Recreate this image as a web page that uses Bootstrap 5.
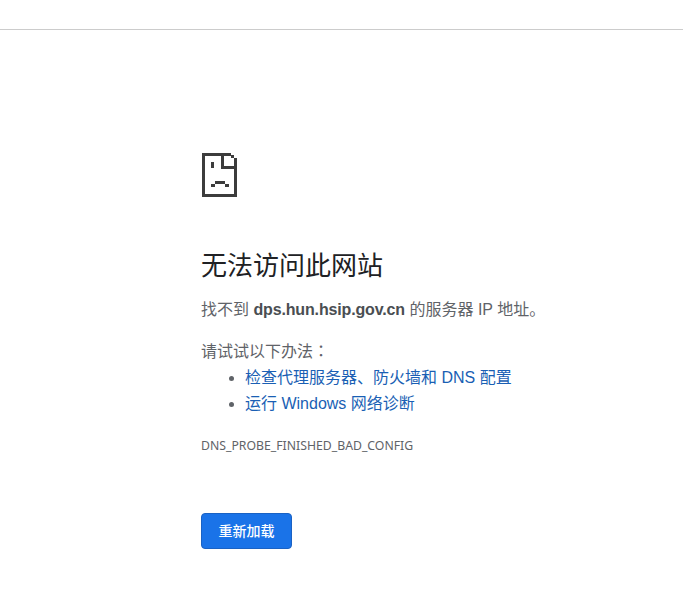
<!DOCTYPE html>
<html lang="zh-CN">
<head>
    <meta charset="UTF-8">
    <meta name="viewport" content="width=device-width, initial-scale=1.0">
    <title>无法访问此网站</title>
    <link rel="stylesheet" href="https://cdn.jsdelivr.net/npm/bootstrap@5.3.0/dist/css/bootstrap.min.css">
    <style>
        body { font-family: "Liberation Sans", "Noto Sans CJK SC", sans-serif; background: #fff; color: #5f6368; font-size: 16px; }
        .top-strip { height: 30px; border-bottom: 1px solid #ccc; }
        .err-wrap { padding: 122px 0 0 201px; width: 600px; }
        .err-icon { display: block; width: 36px; height: 46px; }
        .err-title { font-size: 26px; font-weight: 400; color: #202124; line-height: 32px; margin: 52px 0 0; }
        .err-host { line-height: 22px; margin: 17px 0 0; }
        .err-host b { color: #4a4e52; letter-spacing: -0.15px; }
        .err-try { line-height: 22px; margin: 18px 0 0; }
        .err-colon { font-family: "Noto Sans CJK TC", sans-serif; }
        .err-list { margin: 2px 0 0; padding-left: 44px; line-height: 26px; }
        .err-list a { color: #1a5fb4; text-decoration: none; }
        .err-code { font-family: "Noto Sans", sans-serif; font-size: 12.25px; line-height: 16px; margin: 21px 0 0; color: #5f6368; }
        .err-reload { margin-top: 59px; width: 91px; height: 36px; padding: 0; font-size: 14px; background: #1a73e8; border-color: #1a62c4; border-radius: 4px; font-weight: 500; }
    </style>
</head>
<body>
    <div class="top-strip"></div>
    <div class="err-wrap">
        <!-- sad page icon -->
        <svg class="err-icon" viewBox="0 0 36 46" shape-rendering="crispEdges">
            <path fill="#3c3c3c" d="M1 1h29v3h-29zM1 1h3v44h-3zM1 42h35v3h-35zM33 6h3v39h-3zM30 3h3v3h-3zM20 1h3v16h-3zM20 14h16v3h-16zM10 10h3v6h-3zM14 29h10v3h-10zM10 32h4v3h-4zM24 32h4v3h-4z"/>
        </svg>
        <h1 class="err-title">无法访问此网站</h1>
        <p class="err-host">找不到 <b>dps.hun.hsip.gov.cn</b> 的服务器 IP 地址。</p>
        <p class="err-try">请试试以下办法<span class="err-colon" lang="zh-TW">：</span></p>
        <ul class="err-list">
            <li><a href="#">检查代理服务器、防火墙和 DNS 配置</a></li>
            <li><a href="#">运行 Windows 网络诊断</a></li>
        </ul>
        <div class="err-code">DNS_PROBE_FINISHED_BAD_CONFIG</div>
        <button class="btn btn-primary err-reload d-block">重新加载</button>
    </div>
    <script src="https://cdn.jsdelivr.net/npm/bootstrap@5.3.0/dist/js/bootstrap.bundle.min.js"></script>
</body>
</html>
